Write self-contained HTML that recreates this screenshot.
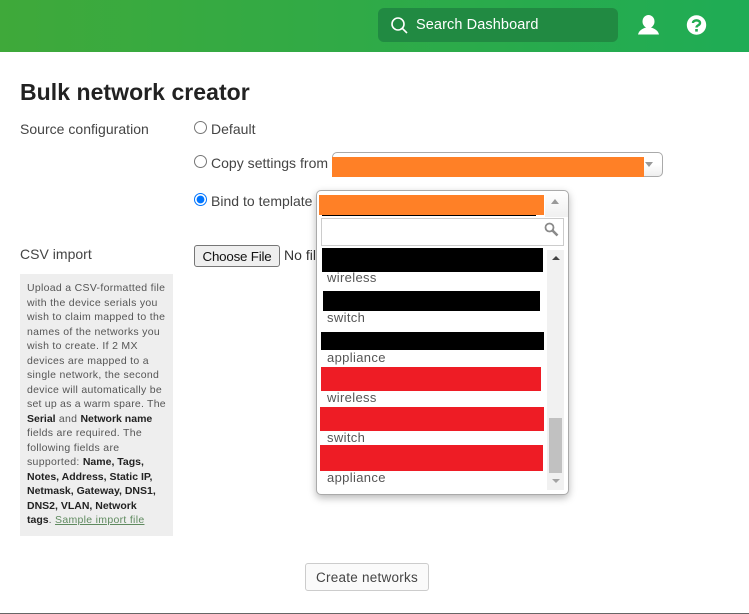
<!DOCTYPE html>
<html><head><meta charset="utf-8">
<style>
html,body{margin:0;padding:0;background:#fff;}
body{width:749px;height:614px;position:relative;overflow:hidden;font-family:"Liberation Sans",sans-serif;font-size:14px;color:#444;}
.a{position:absolute;white-space:nowrap;}
.hdr{left:0;top:0;width:749px;height:52px;background:linear-gradient(90deg,#3fa93a,#1fac55);}
.search{left:378px;top:8px;width:240px;height:34px;background:#218a42;border-radius:6px;}
.l{letter-spacing:.02px;line-height:16px;}
.r{position:absolute;margin:0;width:13px;height:13px;}
.sel{background:linear-gradient(#fff,#fff 50%,#eee);border:1px solid #aaa;border-radius:5px;box-sizing:border-box;}
.o{background:#ff8026;}
.k{background:#000;}
.d{background:#ee1c25;}
.t{left:327px;color:#555;letter-spacing:.35px;line-height:16px;font-size:13px;}
.h{left:27px;font-size:10.5px;line-height:14px;letter-spacing:.3px;color:#555;}
.h b{color:#222;letter-spacing:0;}
</style></head>
<body>
<div class="a hdr"></div>
<div class="a search"></div>
<svg class="a" style="left:390px;top:16px" width="18" height="18" viewBox="0 0 18 18" fill="none" stroke="#fff" stroke-width="1.6"><circle cx="8" cy="8" r="6"/><path d="M12.4 12.4L17 17"/></svg>
<div class="a" style="left:416px;top:17px;color:#fff;font-size:14.5px;line-height:17px;letter-spacing:.1px">Search Dashboard</div>
<svg class="a" style="left:638px;top:15px" width="21" height="20" viewBox="0 0 21 20" fill="#fff"><ellipse cx="10.5" cy="6.5" rx="6" ry="6.5"/><path d="M0 19.5C1 15 5 13.5 8 12.5H13C16 13.5 20 15 21 19.5Z"/></svg>
<svg class="a" style="left:686px;top:15px" width="21" height="20" viewBox="0 0 21 20"><circle cx="10.5" cy="10" r="9.7" fill="#fff"/><path d="M7 8C7 4.5 14 4.5 14 8C14 10.5 10.5 10 10.5 12.5" fill="none" stroke="#21ab51" stroke-width="2.4"/><rect x="9.2" y="14" width="2.6" height="2.6" fill="#21ab51"/></svg>

<div class="a" style="left:20px;top:78px;font-size:23px;font-weight:bold;color:#222;line-height:28px;letter-spacing:.05px">Bulk network creator</div>
<div class="a l" style="left:20px;top:121px">Source configuration</div>
<input class="r" type="radio" name="x" style="left:194px;top:121px">
<div class="a l" style="left:211px;top:121px">Default</div>
<input class="r" type="radio" name="x" style="left:194px;top:155px">
<div class="a l" style="left:211px;top:155px">Copy settings from</div>
<input class="r" type="radio" name="x" checked style="left:194px;top:193px">
<div class="a l" style="left:211px;top:193px">Bind to template</div>

<div class="a sel" style="left:332px;top:152px;width:331px;height:25px"></div>
<div class="a o" style="left:332px;top:157px;width:312px;height:20px"></div>
<div class="a" style="left:645px;top:162px;border-left:4px solid transparent;border-right:4px solid transparent;border-top:5px solid #999"></div>

<div class="a l" style="left:20px;top:246px">CSV import</div>
<button class="a" style="left:194px;top:245px;width:86px;height:22px;padding:0;font:13.33px 'Liberation Sans',sans-serif;letter-spacing:-.2px;color:#111;background:#efefef;border:1px solid #767676;border-radius:3px">Choose File</button>
<div class="a l" style="left:284px;top:247px;color:#333">No file chosen</div>

<div class="a" style="left:20px;top:274px;width:153px;height:262px;background:#eee"></div>
<div class="a h" style="top:281px">Upload a CSV-formatted file</div>
<div class="a h" style="top:295.5px">with the device serials you</div>
<div class="a h" style="top:310px">wish to claim mapped to the</div>
<div class="a h" style="top:324.5px">names of the networks you</div>
<div class="a h" style="top:339px">wish to create. If 2 MX</div>
<div class="a h" style="top:353.5px">devices are mapped to a</div>
<div class="a h" style="top:368px">single network, the second</div>
<div class="a h" style="top:382.5px">device will automatically be</div>
<div class="a h" style="top:397px;letter-spacing:.22px">set up as a warm spare. The</div>
<div class="a h" style="top:411.5px"><b>Serial</b> and <b>Network name</b></div>
<div class="a h" style="top:426px">fields are required. The</div>
<div class="a h" style="top:440.5px">following fields are</div>
<div class="a h" style="top:455px">supported: <b>Name, Tags,</b></div>
<div class="a h" style="top:469.5px"><b>Notes, Address, Static IP,</b></div>
<div class="a h" style="top:484px"><b>Netmask, Gateway, DNS1,</b></div>
<div class="a h" style="top:498.5px"><b>DNS2, VLAN, Network</b></div>
<div class="a h" style="top:513px"><b>tags</b>. <span style="color:#5f8a5f;text-decoration:underline">Sample import file</span></div>

<div class="a" style="left:316px;top:190px;width:253px;height:305px;box-sizing:border-box;background:#fff;border:1px solid #aaa;border-radius:5px;box-shadow:0 3px 8px rgba(0,0,0,.28)"></div>
<div class="a" style="left:545px;top:191px;width:23px;height:26px;background:linear-gradient(#fff,#f0f0f0);border-radius:0 5px 0 0"></div>
<div class="a k" style="left:322px;top:215px;width:214px;height:1px"></div>
<div class="a o" style="left:319px;top:195px;width:225px;height:20px"></div>
<div class="a" style="left:551px;top:199px;border-left:4px solid transparent;border-right:4px solid transparent;border-bottom:5px solid #999"></div>
<div class="a" style="left:321px;top:218px;width:243px;height:28px;box-sizing:border-box;border:1px solid #ccc"></div>
<svg class="a" style="left:544px;top:222px" width="15" height="15" viewBox="0 0 15 15" fill="none" stroke="#8a8a8a"><circle cx="5.5" cy="5.5" r="4" stroke-width="1.8"/><path d="M8.5 8.5L13.5 13.5" stroke-width="2.6"/></svg>

<div class="a" style="left:547px;top:250px;width:17px;height:240px;background:#f1f1f1"></div>
<div class="a" style="left:549px;top:418px;width:13px;height:55px;background:#c1c1c1"></div>
<div class="a" style="left:552px;top:256px;border-left:4px solid transparent;border-right:4px solid transparent;border-bottom:4px solid #444"></div>
<div class="a" style="left:552px;top:479px;border-left:4px solid transparent;border-right:4px solid transparent;border-top:4px solid #a3a3a3"></div>

<div class="a k" style="left:322px;top:248px;width:221px;height:24px"></div>
<div class="a t" style="top:270px">wireless</div>
<div class="a k" style="left:323px;top:291px;width:217px;height:20px"></div>
<div class="a t" style="top:310px">switch</div>
<div class="a k" style="left:321px;top:332px;width:223px;height:18px"></div>
<div class="a t" style="top:350px">appliance</div>
<div class="a d" style="left:321px;top:367px;width:220px;height:24px"></div>
<div class="a t" style="top:390px">wireless</div>
<div class="a d" style="left:320px;top:407px;width:224px;height:24px"></div>
<div class="a t" style="top:430px">switch</div>
<div class="a d" style="left:320px;top:445px;width:223px;height:26px"></div>
<div class="a t" style="top:470px">appliance</div>

<div class="a" style="left:305px;top:563px;width:124px;height:28px;box-sizing:border-box;background:#fafafa;border:1px solid #ccc;border-radius:3px;text-align:center;line-height:27px;letter-spacing:.25px;font-size:13.5px;color:#444">Create networks</div>
<div class="a" style="left:0;top:613px;width:749px;height:1px;background:#666"></div>
</body></html>
